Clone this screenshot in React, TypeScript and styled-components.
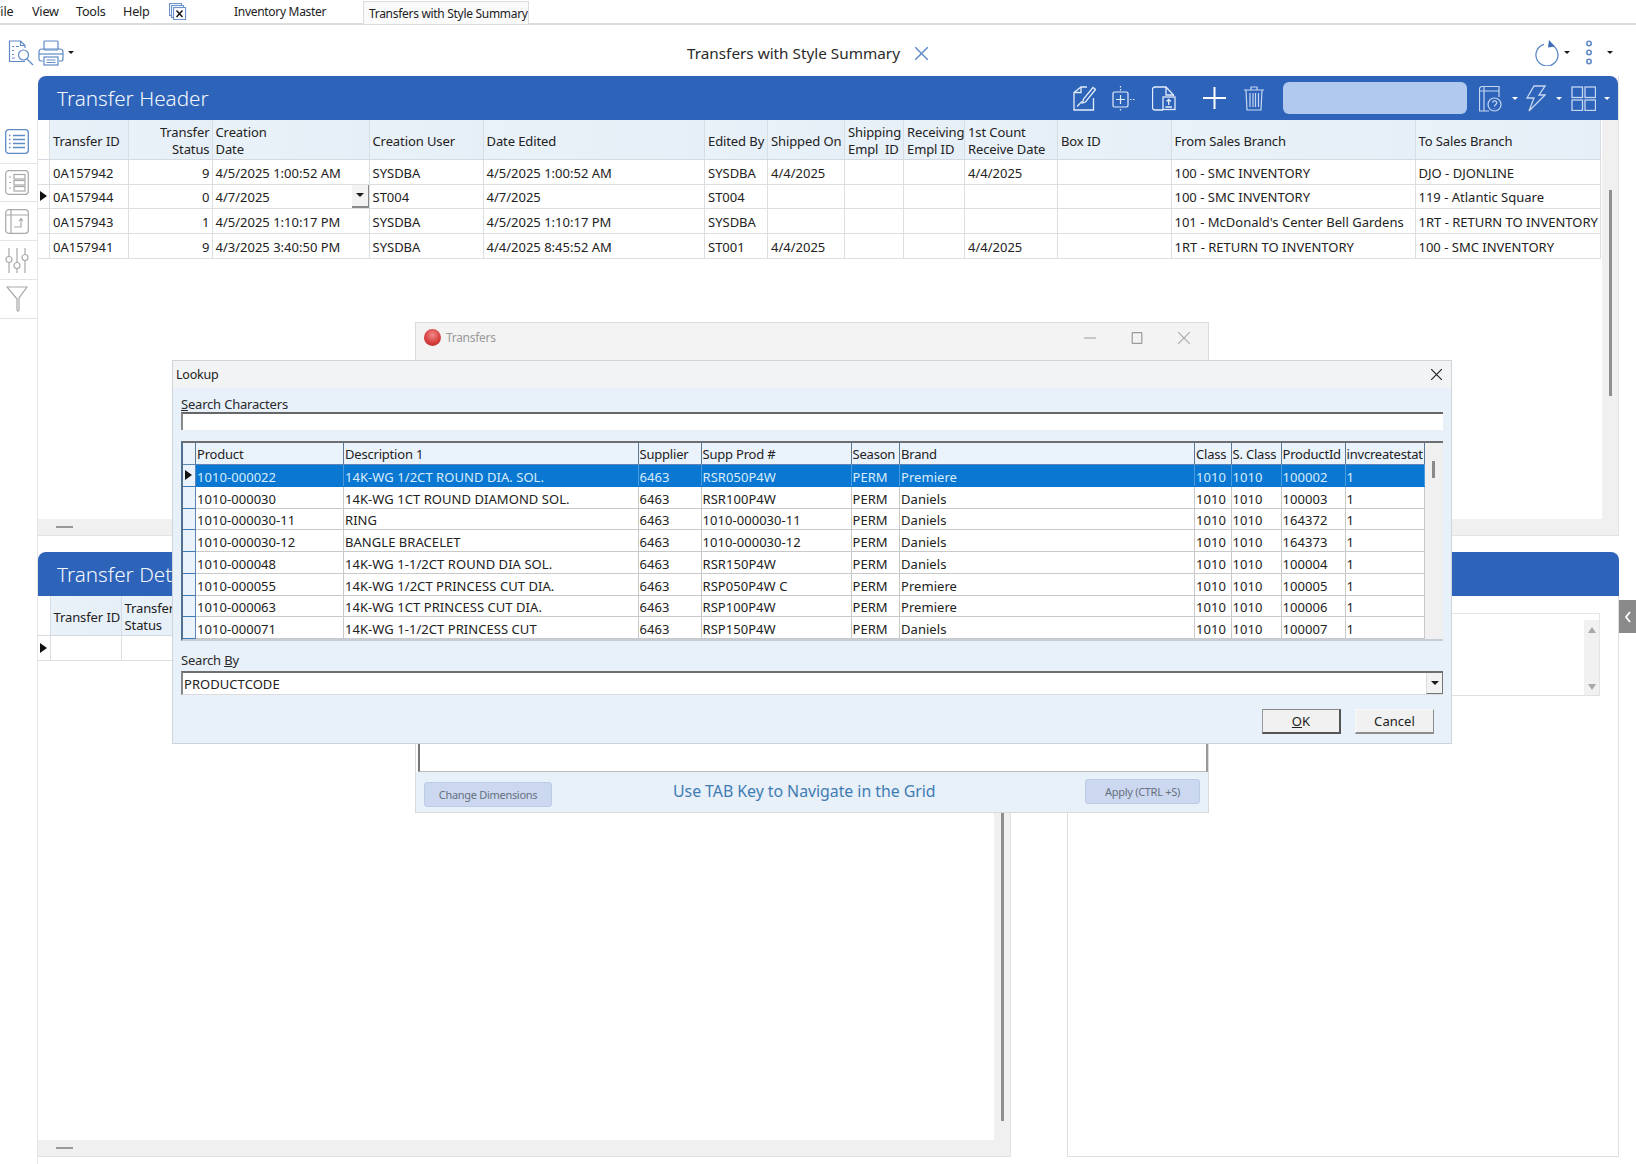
// App.tsx - inventory transfers screen with lookup dialog
import React from 'react';
import styled, { createGlobalStyle } from 'styled-components';

const GlobalStyle = createGlobalStyle`
  html, body {
    margin: 0;
    padding: 0;
    background: #ffffff;
  }
  * {
    box-sizing: border-box;
  }
`;

const BLUE = '#2d64ba';
const FONT = `"Noto Sans", "Open Sans", sans-serif`;

// Page
const Page = styled.div`
  position: relative;
  width: 1636px;
  height: 1164px;
  overflow: hidden;
  background: #ffffff;
  font-family: ${FONT};
  font-size: 13px;
  letter-spacing: 0;
  color: #222;
`;

// Menu bar and tabs
const MenuBar = styled.div`
  display: flex;
  align-items: center;
  height: 25px;
  border-bottom: 2px solid #dcdcdc;
  font-size: 12.6px;
  letter-spacing: -0.2px;
`;

const MenuItem = styled.span<{ $w: number }>`
  width: ${(p) => p.$w}px;
  flex: none;
  white-space: nowrap;
  padding-bottom: 1px;
`;

const FileItem = styled.span`
  flex: none;
  width: 38px;
  margin-left: -6px;
  padding-bottom: 1px;
`;

const ExcelIcon = styled.svg`
  flex: none;
  width: 18px;
  height: 17px;
  margin-left: -1px;
  margin-right: 47px;
`;

const InventoryTab = styled.span`
  flex: none;
  width: 86px;
  font-size: 12px;
  letter-spacing: -0.3px;
  white-space: nowrap;
  padding-bottom: 1px;
`;

const Tab = styled.div`
  flex: none;
  width: 166px;
  height: 23px;
  margin-left: 43px;
  margin-top: 1px;
  padding: 3px 0 0 5px;
  border: 1px solid #dcdcdc;
  border-bottom: none;
  background: #fafafa;
  font-size: 12px;
  letter-spacing: -0.3px;
  white-space: nowrap;
`;

// Action bar
const ActionBar = styled.div`
  position: relative;
  display: flex;
  align-items: center;
  height: 51px;
  padding: 4px 23px 0 8px;
`;

const Caret = styled.span<{ $light?: boolean; $ml?: number; $big?: boolean }>`
  flex: none;
  width: 0;
  height: 0;
  margin-left: ${(p) => p.$ml ?? 4}px;
  border-left: ${(p) => (p.$big ? 4 : 3)}px solid transparent;
  border-right: ${(p) => (p.$big ? 4 : 3)}px solid transparent;
  border-top: ${(p) => (p.$big ? 4 : 3)}px solid ${(p) => (p.$light ? '#ffffff' : '#1a1a1a')};
`;

const ActionTitle = styled.div`
  position: absolute;
  left: 687px;
  top: 16px;
  display: flex;
  align-items: center;
  gap: 15px;
  font-size: 15.3px;
  line-height: 24px;
  color: #2a2a2a;
`;

const Spacer = styled.div`
  flex: 1;
`;

// Workspace
const Workspace = styled.div`
  display: flex;
  align-items: flex-start;
`;

const SideBar = styled.div`
  flex: none;
  width: 38px;
  margin-top: 44px;
  height: 1044px;
  border-right: 1px solid #e6e6e6;
`;

const SideItem = styled.div<{ $h: number }>`
  display: flex;
  align-items: center;
  justify-content: center;
  height: ${(p) => p.$h}px;
  border-bottom: 1px solid #e4e4e4;
  padding-right: 3px;
`;

const Content = styled.div`
  flex: none;
  width: 1581px;
`;

const TopPanel = styled.div`
  display: flex;
  flex-direction: column;
  height: 460px;
  border-right: 1px solid #e4e4e4;
`;

const BlueBar = styled.div`
  display: flex;
  align-items: center;
  flex: none;
  height: 44px;
  padding-left: 19px;
  border-radius: 8px 8px 0 0;
  background: ${BLUE};
`;

const BarTitle = styled.div`
  font-size: 20.7px;
  font-weight: 300;
  color: #f4f7fc;
`;

const Tools = styled.div`
  display: flex;
  align-items: center;
  margin-left: auto;
  padding-right: 8px;
`;

const ToolSlot = styled.span<{ $ml: number }>`
  display: flex;
  flex: none;
  margin-left: ${(p) => p.$ml}px;
`;

const SearchPill = styled.div`
  flex: none;
  width: 184px;
  height: 32px;
  margin-left: 19px;
  border-radius: 6px;
  background: #b2c9ee;
`;

const PanelBody = styled.div`
  display: flex;
  flex: 1;
  min-height: 0;
`;

const GridArea = styled.div`
  flex: none;
  width: 1564px;
  padding-right: 1px;
`;

const ScrollStrip = styled.div<{ $top: number; $h: number }>`
  flex: 1;
  display: flex;
  justify-content: center;
  padding-top: ${(p) => p.$top}px;
  background: #f0f0f0;

  &::before {
    content: '';
    width: 3px;
    height: ${(p) => p.$h}px;
    background: #8f8f8f;
  }
`;

const HScroll = styled.div`
  display: flex;
  align-items: center;
  flex: none;
  height: 17px;
  padding-left: 18px;
  background: #f0f0f0;
  border-bottom: 1px solid #e2e2e2;

  &::before {
    content: '';
    width: 17px;
    height: 2px;
    background: #999;
  }
`;

// Data grid of the main panels
const HeadRow = styled.div<{ $cols: string }>`
  display: grid;
  grid-template-columns: ${(p) => p.$cols};
  height: 40px;
  border-bottom: 1px solid #d5dae0;
`;

const HeadCell = styled.div<{ $right?: boolean; $plain?: boolean }>`
  display: flex;
  align-items: center;
  padding: 3px 2px 0 3px;
  line-height: 17px;
  letter-spacing: -0.1px;
  white-space: pre;
  overflow: hidden;
  text-align: ${(p) => (p.$right ? 'right' : 'left')};
  justify-content: ${(p) => (p.$right ? 'flex-end' : 'flex-start')};
  background: ${(p) => (p.$plain ? '#ffffff' : 'linear-gradient(90deg, #e9f1f9, #e6eef7)')};
  border-right: 1px solid #d6dde5;
`;

const DataRow = styled.div<{ $cols: string }>`
  display: grid;
  grid-template-columns: ${(p) => p.$cols};
  height: 24.67px;
  border-bottom: 1px solid #dcdfe2;
`;

const DataCell = styled.div<{ $right?: boolean }>`
  position: relative;
  display: flex;
  align-items: center;
  padding: 2px 2px 0 3px;
  white-space: nowrap;
  overflow: hidden;
  justify-content: ${(p) => (p.$right ? 'flex-end' : 'flex-start')};
  border-right: 1px solid #dcdfe2;
`;

const MarkerCell = styled(DataCell)`
  padding: 0;
`;

const RowMarker = styled.span`
  flex: none;
  width: 0;
  height: 0;
  margin-left: 2px;
  border-top: 5.5px solid transparent;
  border-bottom: 5.5px solid transparent;
  border-left: 7px solid #111;
`;

const CellDrop = styled.span`
  position: absolute;
  right: 0;
  top: 0;
  bottom: 0;
  width: 17px;
  display: flex;
  align-items: center;
  justify-content: center;
  background: #f3f3f3;
  border-right: 1px solid #8a8a8a;
  border-bottom: 2px solid #8a8a8a;
`;

// Lower part
const LowerPart = styled.div`
  margin-top: 16px;
`;

const Split = styled.div`
  display: flex;
  height: 561px;
`;

const DetailPane = styled.div`
  display: flex;
  flex-direction: column;
  flex: none;
  width: 973px;
  border-right: 1px solid #e2e2e2;
`;

const DetailTop = styled.div`
  display: flex;
  flex: 1;
  min-height: 0;
`;

const DetailGrid = styled.div`
  flex: none;
  width: 956px;
`;

const SummaryPane = styled.div`
  flex: none;
  width: 552px;
  margin-left: 56px;
  padding: 17px 18px 0 0;
  border-left: 1px solid #dfdfdf;
  border-right: 1px solid #dfdfdf;
  border-bottom: 1px solid #dfdfdf;
`;

const SummaryBox = styled.div`
  display: flex;
  justify-content: flex-end;
  height: 83px;
  border-top: 1px solid #e4e4e4;
  border-bottom: 1px solid #e0e0e0;
  border-right: 1px solid #e4e4e4;
`;

const MiniScroll = styled.div`
  display: flex;
  flex-direction: column;
  justify-content: space-between;
  align-items: center;
  width: 15px;
  margin-top: 6px;
  padding: 7px 0 5px;
  background: #f1f1f1;
`;

const MiniArrow = styled.span<{ $up?: boolean }>`
  width: 0;
  height: 0;
  border-left: 4px solid transparent;
  border-right: 4px solid transparent;
  border-${(p) => (p.$up ? 'bottom' : 'top')}: 6px solid #a8a8a8;
`;

const DrawerToggle = styled.div`
  position: absolute;
  right: 0;
  top: 600px;
  width: 17px;
  height: 33px;
  display: flex;
  align-items: center;
  justify-content: center;
  background: #8a8a8a;
`;

// Background window
const TransfersWindow = styled.div`
  position: absolute;
  left: 415px;
  top: 322px;
  width: 794px;
  height: 491px;
  display: flex;
  flex-direction: column;
  border: 1px solid #dadada;
  background: #ffffff;
`;

const WinTitle = styled.div`
  display: flex;
  align-items: center;
  flex: none;
  height: 38px;
  padding: 0 0 9px 8px;
  background: #f3f3f3;
  color: #9a9a9a;
  gap: 5px;
  font-size: 12px;
  letter-spacing: -0.3px;
`;

const WinIcon = styled.span`
  width: 17px;
  height: 17px;
  border-radius: 50%;
  background: radial-gradient(circle at 50% 35%, #f08a8a 0%, #d8403f 55%, #a92a2a 100%);
`;

const WinControls = styled.div`
  display: flex;
  align-items: center;
  margin-left: auto;
  gap: 35px;
  padding: 0 18px 0 0;
`;

const WinBody = styled.div`
  flex: 1;
  margin: 0 0 0 2px;
  border-left: 2px solid #777;
  border-right: 2px solid #999;
  border-bottom: 1px solid #bbb;
`;

const WinFooter = styled.div`
  position: relative;
  display: flex;
  align-items: center;
  justify-content: space-between;
  flex: none;
  height: 40px;
  padding: 0 8px;
  background: #e8f0fa;
`;

const SoftButton = styled.div<{ $w: number; $mt: number }>`
  display: flex;
  align-items: center;
  justify-content: center;
  flex: none;
  width: ${(p) => p.$w}px;
  height: 25px;
  margin-top: ${(p) => p.$mt}px;
  border: 1px solid #bccbe6;
  border-radius: 3px;
  background: #ccd8f0;
  color: #66707f;
  font-size: 11px;
  letter-spacing: -0.3px;
`;

const FooterHint = styled.div`
  position: absolute;
  left: 257px;
  top: 7px;
  font-size: 15.9px;
  line-height: 24px;
  letter-spacing: -0.05px;
  color: #3f7cb2;
`;

// Lookup dialog
const LookupDialog = styled.div`
  position: absolute;
  left: 172px;
  top: 360px;
  width: 1280px;
  height: 384px;
  display: flex;
  flex-direction: column;
  border: 1px solid #d0d4d8;
  background: #e8f0fa;
`;

const LookupTitle = styled.div`
  display: flex;
  align-items: center;
  justify-content: space-between;
  flex: none;
  height: 27px;
  padding: 0 9px 0 3px;
  background: #f2f3f5;
  font-size: 12.5px;
  letter-spacing: -0.2px;
`;

const LookupBody = styled.div`
  display: flex;
  flex-direction: column;
  flex: 1;
  padding: 0 8px;
  letter-spacing: 0.05px;
`;

const FieldLabel = styled.div<{ $mt: number }>`
  margin-top: ${(p) => p.$mt}px;
  height: 17px;
  line-height: 19px;
  letter-spacing: -0.2px;
  color: #2a2a2a;
`;

const SearchInput = styled.div`
  flex: none;
  height: 18px;
  background: #ffffff;
  border-top: 2px solid #666;
  border-left: 2px solid #888;
`;

const LookupTable = styled.div`
  display: flex;
  flex: none;
  height: 200px;
  margin-top: 11px;
  border-top: 2px solid #6b6f74;
  border-left: 2px solid #51708f;
  border-bottom: 2px solid #c8ced6;
  background: #f0f0f0;
`;

const LookupRows = styled.div`
  flex: none;
  width: 1241.6px;
  overflow: hidden;
`;

const LookupHead = styled.div<{ $cols: string }>`
  display: grid;
  grid-template-columns: ${(p) => p.$cols};
  height: 22px;
  background: #eaf2fb;
  border-bottom: 1px solid #5e86b4;
  letter-spacing: -0.2px;
`;

const LookupHeadCell = styled.div`
  display: flex;
  align-items: center;
  padding: 1px 0 0 1px;
  white-space: nowrap;
  overflow: hidden;
  border-right: 1px solid #5c7896;
`;

const LookupRow = styled.div<{ $cols: string; $active?: boolean }>`
  display: grid;
  grid-template-columns: ${(p) => p.$cols};
  height: 21.75px;
  background: ${(p) => (p.$active ? '#0a78d2' : '#ffffff')};
  color: ${(p) => (p.$active ? '#d8ecfb' : '#222')};
  border-bottom: 1px solid ${(p) => (p.$active ? '#0a78d2' : '#c9c9c9')};
`;

const LookupCell = styled.div<{ $active?: boolean }>`
  display: flex;
  align-items: center;
  padding: 4px 0 0 1px;
  line-height: 15px;
  white-space: nowrap;
  overflow: hidden;
  border-right: 1px solid ${(p) => (p.$active ? '#4b9adb' : '#c9c9c9')};
`;

const RowHeader = styled.div`
  display: flex;
  align-items: center;
  background: #eaf2fb;
  border-right: 1px solid #5e86b4;
  border-bottom: 1px solid #3f7ab8;
  margin-bottom: -1px;
`;

const LookupScroll = styled.div`
  flex: 1;
  display: flex;
  justify-content: center;
  padding-top: 18px;

  &::before {
    content: '';
    width: 3px;
    height: 17px;
    background: #8a8a8a;
  }
`;

const ComboBox = styled.div`
  display: flex;
  align-items: center;
  justify-content: space-between;
  flex: none;
  height: 24px;
  margin-top: 3px;
  padding-left: 1px;
  background: #ffffff;
  border-top: 2px solid #6f6f6f;
  border-left: 2px solid #888;
  border-bottom: 1px solid #dcdcdc;
`;

const ComboDrop = styled.span`
  display: flex;
  align-items: center;
  justify-content: center;
  align-self: stretch;
  width: 17px;
  background: #f2f2f2;
  border-right: 1px solid #777;
  border-bottom: 1px solid #777;
  border-left: 1px solid #ddd;
`;

const DialogButtons = styled.div`
  display: flex;
  justify-content: flex-end;
  gap: 14px;
  margin-top: 14px;
  padding-right: 9px;
`;

const DialogButton = styled.div<{ $w: number; $default?: boolean }>`
  display: flex;
  align-items: center;
  justify-content: center;
  width: ${(p) => p.$w}px;
  height: 25px;
  background: #f1f1f1;
  border-top: 1px solid ${(p) => (p.$default ? '#8a8a8a' : '#f8f8f8')};
  border-left: 1px solid ${(p) => (p.$default ? '#9a9a9a' : '#f8f8f8')};
  border-right: ${(p) => (p.$default ? '2px solid #555' : '1px solid #8c8c8c')};
  border-bottom: ${(p) => (p.$default ? '2px solid #555' : '2px solid #8c8c8c')};
`;

// Icons
const Ico = styled.svg`
  flex: none;
  display: block;
`;

const Stroke: React.FC<{ w: number; h: number; color: string; children: React.ReactNode; sw?: number }> = ({
  w,
  h,
  color,
  children,
  sw = 1.2,
}) => (
  <Ico width={w} height={h} viewBox={`0 0 ${w} ${h}`} fill="none" stroke={color} strokeWidth={sw}>
    {children}
  </Ico>
);

const ICON_BLUE = '#5f8ac6';
const ICON_GREY = '#a9a9a9';
const WHITE = '#e4ecf9';
const DIM_WHITE = '#c6d6f0';

const PreviewIcon = () => (
  <Stroke w={26} h={26} color={ICON_BLUE}>
    <path d="M17 21.5H1.5V1h11l4.5 4.5V8" />
    <path d="M12.5 1v4.5H17" />
    <path d="M4 6.5h2M8 6.5h3M4 10.5h2M4 14.5h2M4 18h3" />
    <circle cx="15.5" cy="15" r="5" />
    <path d="M19 19l6 6" />
  </Stroke>
);

const PrinterIcon = () => (
  <Stroke w={26} h={26} color={ICON_BLUE}>
    <rect x="6" y="1" width="14" height="9" rx="1" />
    <path d="M5 21H3a2 2 0 0 1-2-2v-7a3 3 0 0 1 3-3h18a3 3 0 0 1 3 3v7a2 2 0 0 1-2 2h-2" />
    <path d="M1 14h24" />
    <rect x="6" y="17" width="14" height="8" />
    <path d="M8.5 20h9M8.5 22.5h9" />
  </Stroke>
);

const UndoIcon = () => (
  <Ico width={24} height={26} viewBox="0 0 24 26" fill="none">
    <path d="M9 4.4A11 11 0 1 0 18 5.8" stroke={ICON_BLUE} strokeWidth="1.3" />
    <path d="M14 0l6 6.5-7 1z" fill="#3f6fb8" />
  </Ico>
);

const DotsIcon = () => (
  <Ico width={8} height={25} viewBox="0 0 8 25" fill="none" stroke={ICON_BLUE} strokeWidth="1.6">
    <circle cx="4" cy="3.5" r="2.2" />
    <circle cx="4" cy="12.5" r="2.2" />
    <circle cx="4" cy="21.5" r="2.2" />
  </Ico>
);

const EditNoteIcon = () => (
  <Stroke w={23} h={25} color={WHITE} sw={1.3}>
    <path d="M14 1H8L1 6.5V24h19.5V12" />
    <path d="M8 1v5.5H1" />
    <path d="M9.5 17l1-4L20 1.5l2.5 2L12.5 16z" />
    <path d="M4 20.5l5-5" />
  </Stroke>
);

const AddCellIcon = () => (
  <Ico width={24} height={25} viewBox="0 0 24 25" fill="none" stroke={WHITE} strokeWidth="1.2">
    <rect x="1" y="6" width="15" height="15" rx="1.5" />
    <path d="M8.5 9v9M4 13.5h9" />
    <path d="M8.5 0v1.5M8.5 3v1.5M8.5 23v1.5M18 13.5h1.5M21 13.5h1.5" />
  </Ico>
);

const DocExportIcon = () => (
  <Stroke w={24} h={25} color={WHITE} sw={1.3}>
    <path d="M11 24H3a2.5 2.5 0 0 1-2.5-2.5v-18A2.5 2.5 0 0 1 3 1h11l7.5 8v1" />
    <path d="M14 1v8h7.5" />
    <rect x="11" y="11" width="12" height="12.5" fill={BLUE} />
    <path d="M13.5 21h6.5M16.7 19v-5.5M14.5 15.5l2.2-2.2 2.2 2.2" />
  </Stroke>
);

const PlusIcon = () => (
  <Ico width={23} height={22} viewBox="0 0 23 22" fill="none" stroke="#ffffff" strokeWidth="2">
    <path d="M11.5 0v22M0 11h23" />
  </Ico>
);

const TrashIcon = () => (
  <Stroke w={20} h={25} color={DIM_WHITE} sw={1.2}>
    <path d="M0 4h20M7 4V1h6v3" />
    <path d="M2 4l1 20h14l1-20" />
    <path d="M6 7v14M9 7v14M11.5 7v14M14.5 7v14" />
  </Stroke>
);

const HelpBookIcon = () => (
  <Stroke w={23} h={27} color={DIM_WHITE} sw={1.2}>
    <path d="M20 12V1.5H3a2.5 2.5 0 0 0-2.5 2.5v22H10" />
    <path d="M1 6h19M5 1.5V26" />
    <circle cx="15.5" cy="19.5" r="6.5" />
    <path d="M13.5 17.5c.3-2.2 4.5-2.2 4.3.4-.2 1.6-2 1.6-2.4 3.6M15.2 23.5v.4" />
  </Stroke>
);

const BoltIcon = () => (
  <Stroke w={20} h={27} color={DIM_WHITE} sw={1.3}>
    <path d="M8 1h11l-6 9h6L3 26l5-13H1z" />
  </Stroke>
);

const TilesIcon = () => (
  <Stroke w={25} h={25} color={DIM_WHITE} sw={1.3}>
    <rect x="1" y="1" width="10.5" height="10.5" />
    <rect x="14" y="1" width="10.5" height="10.5" />
    <rect x="1" y="14" width="10.5" height="10.5" />
    <rect x="14" y="14" width="10.5" height="10.5" />
  </Stroke>
);

const ListIcon = () => (
  <Stroke w={24} h={25} color={ICON_BLUE} sw={1.3}>
    <rect x="0.7" y="0.7" width="22.6" height="23.6" rx="3" />
    <path d="M4 6.5h1.5M8 6.5h12M4 10.5h1.5M8 10.5h12M4 14.5h1.5M8 14.5h12M4 18.5h1.5M8 18.5h12" />
  </Stroke>
);

const SubListIcon = () => (
  <Stroke w={24} h={25} color={ICON_GREY} sw={1.2}>
    <rect x="0.7" y="0.7" width="22.6" height="23.6" rx="3" />
    <path d="M4 7h2M4 12.5h2M4 18h2" />
    <rect x="9" y="4.5" width="11" height="4.5" />
    <rect x="9" y="10.5" width="11" height="4.5" />
    <rect x="9" y="16.5" width="11" height="4.5" />
  </Stroke>
);

const PivotIcon = () => (
  <Stroke w={24} h={25} color={ICON_GREY} sw={1.2}>
    <rect x="0.7" y="0.7" width="22.6" height="23.6" rx="3" />
    <path d="M1 6h22M6 1v23" />
    <path d="M9 18h7V10M14 12l2-2.5 2 2.5" />
  </Stroke>
);

const SlidersIcon = () => (
  <Stroke w={24} h={27} color={ICON_GREY} sw={1.2}>
    <path d="M4 1v9M4 15v11M12 1v15M12 21v5M20 1v7M20 13v13" />
    <circle cx="4" cy="12.5" r="3" />
    <circle cx="12" cy="18.5" r="3" />
    <circle cx="20" cy="10.5" r="3" />
  </Stroke>
);

const FunnelIcon = () => (
  <Stroke w={22} h={26} color={ICON_GREY} sw={1.2}>
    <path d="M1 1h20l-8 11v12c0 1.5-2 1.5-2 0V13z" />
  </Stroke>
);

const Glyph: React.FC<{ color: string; size?: number; kind: 'x' | 'min' | 'max'; sw?: number }> = ({
  color,
  size = 10,
  kind,
  sw = 1,
}) => (
  <Ico width={size} height={size} viewBox="0 0 10 10" fill="none" stroke={color} strokeWidth={sw}>
    {kind === 'x' && <path d="M0 0l10 10M10 0L0 10" />}
    {kind === 'min' && <path d="M0 5h10" />}
    {kind === 'max' && <rect x="1" y="0.5" width="8" height="9" rx="0.5" />}
  </Ico>
);

// Data
const MAIN_COLS = '12px 78.5px 84px 157px 114px 221.5px 63px 77px 59px 61px 93px 113.5px 244px 185.5px';
const DETAIL_COLS = '12.5px 71px 76px';
const LOOKUP_COLS = '13px 148px 294.5px 63px 150px 48.5px 295px 36.5px 50px 64px 79px';

const MAIN_HEAD: { text: string; right?: boolean }[] = [
  { text: 'Transfer ID' },
  { text: 'Transfer\nStatus', right: true },
  { text: 'Creation\nDate' },
  { text: 'Creation User' },
  { text: 'Date Edited' },
  { text: 'Edited By' },
  { text: 'Shipped On' },
  { text: 'Shipping\nEmpl  ID' },
  { text: 'Receiving\nEmpl ID' },
  { text: '1st Count\nReceive Date' },
  { text: 'Box ID' },
  { text: 'From Sales Branch' },
  { text: 'To Sales Branch' },
];

const MAIN_ROWS: string[][] = [
  ['0A157942', '9', '4/5/2025 1:00:52 AM', 'SYSDBA', '4/5/2025 1:00:52 AM', 'SYSDBA', '4/4/2025', '', '', '4/4/2025', '', '100 - SMC INVENTORY', 'DJO - DJONLINE'],
  ['0A157944', '0', '4/7/2025', 'ST004', '4/7/2025', 'ST004', '', '', '', '', '', '100 - SMC INVENTORY', '119 - Atlantic Square'],
  ['0A157943', '1', '4/5/2025 1:10:17 PM', 'SYSDBA', '4/5/2025 1:10:17 PM', 'SYSDBA', '', '', '', '', '', "101 - McDonald's Center Bell Gardens", '1RT - RETURN TO INVENTORY'],
  ['0A157941', '9', '4/3/2025 3:40:50 PM', 'SYSDBA', '4/4/2025 8:45:52 AM', 'ST001', '4/4/2025', '', '', '4/4/2025', '', '1RT - RETURN TO INVENTORY', '100 - SMC INVENTORY'],
];

const LOOKUP_HEAD = ['Product', 'Description 1', 'Supplier', 'Supp Prod #', 'Season', 'Brand', 'Class', 'S. Class', 'ProductId', 'invcreatestat'];

const LOOKUP_ROWS: string[][] = [
  ['1010-000022', '14K-WG 1/2CT ROUND DIA. SOL.', '6463', 'RSR050P4W', 'PERM', 'Premiere', '1010', '1010', '100002', '1'],
  ['1010-000030', '14K-WG 1CT ROUND DIAMOND SOL.', '6463', 'RSR100P4W', 'PERM', 'Daniels', '1010', '1010', '100003', '1'],
  ['1010-000030-11', 'RING', '6463', '1010-000030-11', 'PERM', 'Daniels', '1010', '1010', '164372', '1'],
  ['1010-000030-12', 'BANGLE BRACELET', '6463', '1010-000030-12', 'PERM', 'Daniels', '1010', '1010', '164373', '1'],
  ['1010-000048', '14K-WG 1-1/2CT ROUND DIA SOL.', '6463', 'RSR150P4W', 'PERM', 'Daniels', '1010', '1010', '100004', '1'],
  ['1010-000055', '14K-WG 1/2CT PRINCESS CUT DIA.', '6463', 'RSP050P4W C', 'PERM', 'Premiere', '1010', '1010', '100005', '1'],
  ['1010-000063', '14K-WG 1CT PRINCESS CUT DIA.', '6463', 'RSP100P4W', 'PERM', 'Premiere', '1010', '1010', '100006', '1'],
  ['1010-000071', '14K-WG 1-1/2CT PRINCESS CUT', '6463', 'RSP150P4W', 'PERM', 'Daniels', '1010', '1010', '100007', '1'],
];

const App: React.FC = () => {
  return (
    <Page>
      <GlobalStyle />

      <MenuBar>
        <FileItem>File</FileItem>
        <MenuItem $w={44}>View</MenuItem>
        <MenuItem $w={47}>Tools</MenuItem>
        <MenuItem $w={47}>Help</MenuItem>
        <ExcelIcon viewBox="0 0 18 17" fill="none">
          <rect x="0.6" y="0.6" width="12" height="12" stroke="#5f8ac6" />
          <rect x="2.6" y="2.6" width="12" height="12" fill="#fff" stroke="#5f8ac6" />
          <rect x="4.6" y="4.6" width="12" height="12" fill="#fff" stroke="#5f8ac6" />
          <path d="M7.5 7.5l6 6.5M13.5 7.5l-6 6.5" stroke="#111" strokeWidth="1.4" />
        </ExcelIcon>
        <InventoryTab>Inventory Master</InventoryTab>
        <Tab>Transfers with Style Summary</Tab>
      </MenuBar>

      <ActionBar>
        <PreviewIcon />
        <ToolSlot $ml={4}>
          <PrinterIcon />
        </ToolSlot>
        <Caret $ml={4} />
        <ActionTitle>
          Transfers with Style Summary
          <Glyph kind="x" color="#5f8ac6" size={13} sw={1.1} />
        </ActionTitle>
        <Spacer />
        <UndoIcon />
        <Caret $ml={5} />
        <ToolSlot $ml={15}>
          <DotsIcon />
        </ToolSlot>
        <Caret $ml={14} />
      </ActionBar>

      <Workspace>
        <SideBar>
          <SideItem $h={44}>
            <ListIcon />
          </SideItem>
          <SideItem $h={38}>
            <SubListIcon />
          </SideItem>
          <SideItem $h={39}>
            <PivotIcon />
          </SideItem>
          <SideItem $h={39}>
            <SlidersIcon />
          </SideItem>
          <SideItem $h={39}>
            <FunnelIcon />
          </SideItem>
        </SideBar>

        <Content>
          <TopPanel>
            <BlueBar>
              <BarTitle>Transfer Header</BarTitle>
              <Tools>
                <EditNoteIcon />
                <ToolSlot $ml={16}>
                  <AddCellIcon />
                </ToolSlot>
                <ToolSlot $ml={16}>
                  <DocExportIcon />
                </ToolSlot>
                <ToolSlot $ml={27}>
                  <PlusIcon />
                </ToolSlot>
                <ToolSlot $ml={18}>
                  <TrashIcon />
                </ToolSlot>
                <SearchPill />
                <ToolSlot $ml={12}>
                  <HelpBookIcon />
                </ToolSlot>
                <Caret $light $ml={10} />
                <ToolSlot $ml={8}>
                  <BoltIcon />
                </ToolSlot>
                <Caret $light $ml={10} />
                <ToolSlot $ml={9}>
                  <TilesIcon />
                </ToolSlot>
                <Caret $light $ml={8} />
              </Tools>
            </BlueBar>
            <PanelBody>
              <GridArea>
                <HeadRow $cols={MAIN_COLS}>
                  <HeadCell $plain />
                  {MAIN_HEAD.map((h) => (
                    <HeadCell key={h.text} $right={h.right}>
                      {h.text}
                    </HeadCell>
                  ))}
                </HeadRow>
                {MAIN_ROWS.map((row, r) => (
                  <DataRow key={row[0]} $cols={MAIN_COLS}>
                    <MarkerCell>{r === 1 && <RowMarker />}</MarkerCell>
                    {row.map((value, c) => (
                      <DataCell key={c} $right={c === 1}>
                        {value}
                        {r === 1 && c === 2 && (
                          <CellDrop>
                            <Caret $big $ml={0} />
                          </CellDrop>
                        )}
                      </DataCell>
                    ))}
                  </DataRow>
                ))}
              </GridArea>
              <ScrollStrip $top={70} $h={206} />
            </PanelBody>
            <HScroll />
          </TopPanel>

          <LowerPart>
            <BlueBar>
              <BarTitle>Transfer Details</BarTitle>
            </BlueBar>
            <Split>
              <DetailPane>
                <DetailTop>
                  <DetailGrid>
                    <HeadRow $cols={DETAIL_COLS}>
                      <HeadCell $plain />
                      <HeadCell>Transfer ID</HeadCell>
                      <HeadCell>{'Transfer\nStatus'}</HeadCell>
                    </HeadRow>
                    <DataRow $cols={DETAIL_COLS}>
                      <MarkerCell>
                        <RowMarker />
                      </MarkerCell>
                      <DataCell />
                      <DataCell />
                    </DataRow>
                  </DetailGrid>
                  <ScrollStrip $top={0} $h={525} />
                </DetailTop>
                <HScroll />
              </DetailPane>
              <SummaryPane>
                <SummaryBox>
                  <MiniScroll>
                    <MiniArrow $up />
                    <MiniArrow />
                  </MiniScroll>
                </SummaryBox>
              </SummaryPane>
            </Split>
          </LowerPart>
        </Content>
      </Workspace>

      <DrawerToggle>
        <Ico width={8} height={12} viewBox="0 0 8 12" fill="none" stroke="#fff" strokeWidth="1.8">
          <path d="M6 1L2 6l4 5" />
        </Ico>
      </DrawerToggle>

      <TransfersWindow>
        <WinTitle>
          <WinIcon />
          Transfers
          <WinControls>
            <Glyph kind="min" color="#aaa" size={12} />
            <Glyph kind="max" color="#999" size={12} />
            <Glyph kind="x" color="#aaa" size={12} />
          </WinControls>
        </WinTitle>
        <WinBody />
        <WinFooter>
          <SoftButton $w={128} $mt={4}>
            Change Dimensions
          </SoftButton>
          <FooterHint>Use TAB Key to Navigate in the Grid</FooterHint>
          <SoftButton $w={115} $mt={-1}>
            Apply (CTRL +S)
          </SoftButton>
        </WinFooter>
      </TransfersWindow>

      <LookupDialog>
        <LookupTitle>
          Lookup
          <Glyph kind="x" color="#222" size={11} sw={1.1} />
        </LookupTitle>
        <LookupBody>
          <FieldLabel $mt={7}>
            <u>S</u>earch Characters
          </FieldLabel>
          <SearchInput />
          <LookupTable>
            <LookupRows>
              <LookupHead $cols={LOOKUP_COLS}>
                <LookupHeadCell />
                {LOOKUP_HEAD.map((h) => (
                  <LookupHeadCell key={h}>{h}</LookupHeadCell>
                ))}
              </LookupHead>
              {LOOKUP_ROWS.map((row, r) => (
                <LookupRow key={row[0]} $cols={LOOKUP_COLS} $active={r === 0}>
                  <RowHeader>{r === 0 && <RowMarker />}</RowHeader>
                  {row.map((value, c) => (
                    <LookupCell key={c} $active={r === 0}>
                      {value}
                    </LookupCell>
                  ))}
                </LookupRow>
              ))}
            </LookupRows>
            <LookupScroll />
          </LookupTable>
          <FieldLabel $mt={10}>
            Search <u>B</u>y
          </FieldLabel>
          <ComboBox>
            PRODUCTCODE
            <ComboDrop>
              <Caret $big $ml={0} />
            </ComboDrop>
          </ComboBox>
          <DialogButtons>
            <DialogButton $w={79} $default>
              <span>
                <u>O</u>K
              </span>
            </DialogButton>
            <DialogButton $w={79}>Cancel</DialogButton>
          </DialogButtons>
        </LookupBody>
      </LookupDialog>
    </Page>
  );
};

export default App;
